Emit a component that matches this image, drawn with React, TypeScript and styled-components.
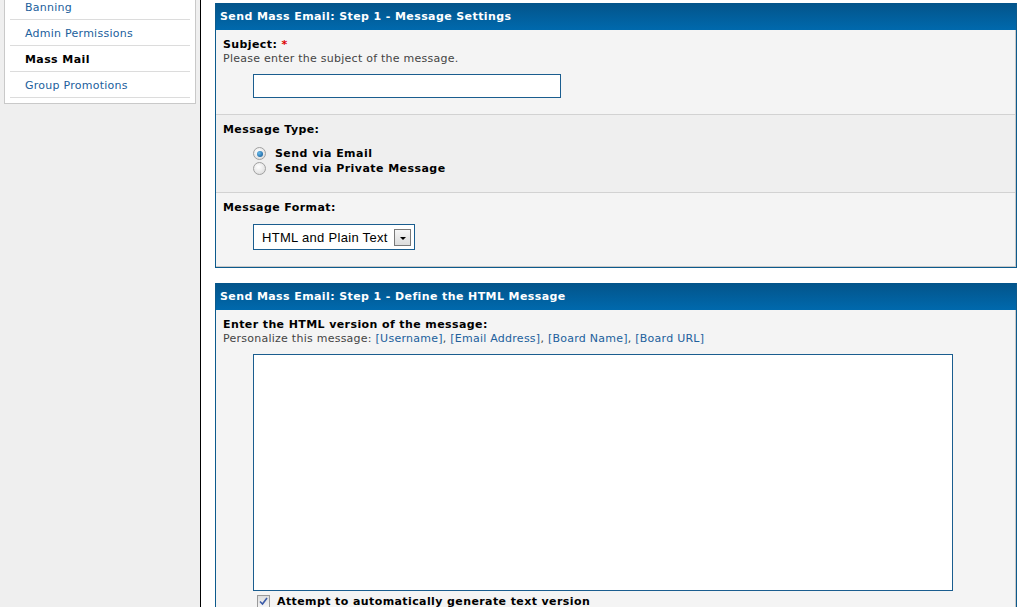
import React from "react";
import styled, { createGlobalStyle } from "styled-components";

const GlobalStyle = createGlobalStyle`
  html, body { margin: 0; padding: 0; background: #fff; overflow: hidden; }
  * { box-sizing: border-box; }
`;

const Page = styled.div`
  display: flex;
  width: 1032px;
  height: 607px;
  overflow: hidden;
  font-family: "DejaVu Sans", Verdana, sans-serif;
`;

const Sidebar = styled.div`
  width: 201px;
  flex: none;
  background: #efefef;
  border-right: 1px solid #000;
  padding-left: 4px;
`;

const NavBox = styled.ul`
  list-style: none;
  margin: -7px 0 0;
  width: 192px;
  background: #fff;
  border: 1px solid #c9c9c9;
  padding: 0 5px 5px;
`;

const NavItem = styled.li<{ $active?: boolean }>`
  height: 26px;
  line-height: 27px;
  border-bottom: 1px solid #dcdcdc;
  padding-left: 15px;
  font-size: 11px;
  letter-spacing: ${(p) => (p.$active ? "0.4px" : "0.25px")};
  color: ${(p) => (p.$active ? "#000" : "#21609c")};
  font-weight: ${(p) => (p.$active ? "bold" : "normal")};
`;

const Main = styled.div`
  flex: 1;
  padding: 3px 15px 0 14px;
`;

const Panel = styled.section`
  border: 1px solid #0c5a8c;
  margin-bottom: 15px;
  background: #f4f4f4;
  box-shadow: inset -1px -1px 0 #c8c8c8;
`;

const PanelHeader = styled.div`
  height: 27px;
  line-height: 28px;
  padding-left: 4px;
  margin: -1px 0 0;
  color: #fff;
  font-size: 11px;
  font-weight: bold;
  letter-spacing: 0.4px;
  background: linear-gradient(to bottom, #03548a, #0069ad);
`;

const Row = styled.div<{ $bg?: string; $sep?: boolean; $pt?: number }>`
  padding: ${(p) => p.$pt ?? 7}px 7px 7px;
  background: ${(p) => p.$bg || "transparent"};
  border-top: ${(p) => (p.$sep ? "1px solid #d2d2d2" : "none")};
  margin-right: 1px;
`;

const Label = styled.div`
  font-size: 11px;
  font-weight: bold;
  letter-spacing: 0.4px;
  color: #000;
  line-height: 15px;
`;

const Req = styled.span`
  color: #d00;
`;

const Help = styled.div`
  font-size: 11px;
  letter-spacing: 0.25px;
  color: #444;
  line-height: 13px;
`;

const Token = styled.span`
  color: #21609c;
`;

const Field = styled.div<{ $bottom?: number; $top?: number }>`
  margin: ${(p) => p.$top ?? 9}px 0 ${(p) => p.$bottom ?? 9}px 30px;
`;

const TextInput = styled.div`
  width: 308px;
  height: 24px;
  background: #fff;
  border: 1px solid #1a5d8f;
`;

const RadioLine = styled.div`
  display: flex;
  align-items: center;
  height: 15px;
  font-size: 11px;
  font-weight: bold;
  letter-spacing: 0.45px;
  color: #000;
`;

const RadioDot = styled.span<{ $checked?: boolean }>`
  width: 13px;
  height: 13px;
  border-radius: 50%;
  border: 1px solid #a0a0a0;
  background: radial-gradient(circle at 40% 35%, #fff, #d6d6d6);
  margin-right: 9px;
  display: flex;
  align-items: center;
  justify-content: center;
  &::after {
    content: "";
    display: ${(p) => (p.$checked ? "block" : "none")};
    width: 6px;
    height: 6px;
    border-radius: 50%;
    background: radial-gradient(circle at 35% 35%, #6bbcec, #064f8e);
  }
`;

const Select = styled.div`
  width: 162px;
  height: 26px;
  background: #fff;
  border: 1px solid #1a5d8f;
  display: flex;
  align-items: center;
  justify-content: space-between;
  padding: 0 3px 0 8px;
  font-family: "Liberation Sans", Arial, sans-serif;
  font-size: 13px;
  letter-spacing: 0.3px;
  color: #000;
`;

const SelectButton = styled.span`
  width: 17px;
  height: 17px;
  border: 1px solid #7a7a7a;
  background: linear-gradient(#f6f6f6, #dcdcdc);
  display: flex;
  align-items: center;
  justify-content: center;
  &::after {
    content: "";
    border-left: 3px solid transparent;
    border-right: 3px solid transparent;
    border-top: 3px solid #000;
    margin-top: 2px;
  }
`;

const TextArea = styled.div`
  width: 700px;
  height: 237px;
  background: #fff;
  border: 1px solid #1a5d8f;
`;

const CheckLine = styled.div`
  display: flex;
  align-items: center;
  margin: 4px 0 0 34px;
  font-size: 11px;
  font-weight: bold;
  letter-spacing: 0.4px;
  color: #000;
  gap: 7px;
`;

const CheckBox = styled.span`
  width: 13px;
  height: 13px;
  border: 1px solid #9a9a9a;
  background: linear-gradient(#dedede, #f4f4f4);
  display: flex;
  align-items: center;
  justify-content: center;
`;

export default function App() {
  return (
    <>
      <GlobalStyle />
      <Page>
        <Sidebar>
          <NavBox>
            <NavItem>Banning</NavItem>
            <NavItem>Admin Permissions</NavItem>
            <NavItem $active>Mass Mail</NavItem>
            <NavItem>Group Promotions</NavItem>
          </NavBox>
        </Sidebar>
        <Main>
          <Panel>
            <PanelHeader>Send Mass Email: Step 1 - Message Settings</PanelHeader>
            <Row>
              <Label>
                Subject: <Req>*</Req>
              </Label>
              <Help>Please enter the subject of the message.</Help>
              <Field>
                <TextInput />
              </Field>
            </Row>
            <Row $sep $bg="#efefef">
              <Label>Message Type:</Label>
              <Field>
                <RadioLine>
                  <RadioDot $checked />
                  Send via Email
                </RadioLine>
                <RadioLine>
                  <RadioDot />
                  Send via Private Message
                </RadioLine>
              </Field>
            </Row>
            <Row $sep>
              <Label>Message Format:</Label>
              <Field $bottom={10}>
                <Select>
                  HTML and Plain Text
                  <SelectButton />
                </Select>
              </Field>
            </Row>
          </Panel>
          <Panel>
            <PanelHeader>Send Mass Email: Step 1 - Define the HTML Message</PanelHeader>
            <Row>
              <Label>Enter the HTML version of the message:</Label>
              <Help>
                Personalize this message: <Token>[Username]</Token>, <Token>[Email Address]</Token>,{" "}
                <Token>[Board Name]</Token>, <Token>[Board URL]</Token>
              </Help>
              <Field $top={9} $bottom={0}>
                <TextArea />
              </Field>
              <CheckLine>
                <CheckBox>
                  <svg width="9" height="9" viewBox="0 0 9 9">
                    <path d="M1 4.5 L3.5 7 L8 1" fill="none" stroke="#3a5aa8" strokeWidth="1.6" />
                  </svg>
                </CheckBox>
                Attempt to automatically generate text version
              </CheckLine>
            </Row>
          </Panel>
        </Main>
      </Page>
    </>
  );
}
